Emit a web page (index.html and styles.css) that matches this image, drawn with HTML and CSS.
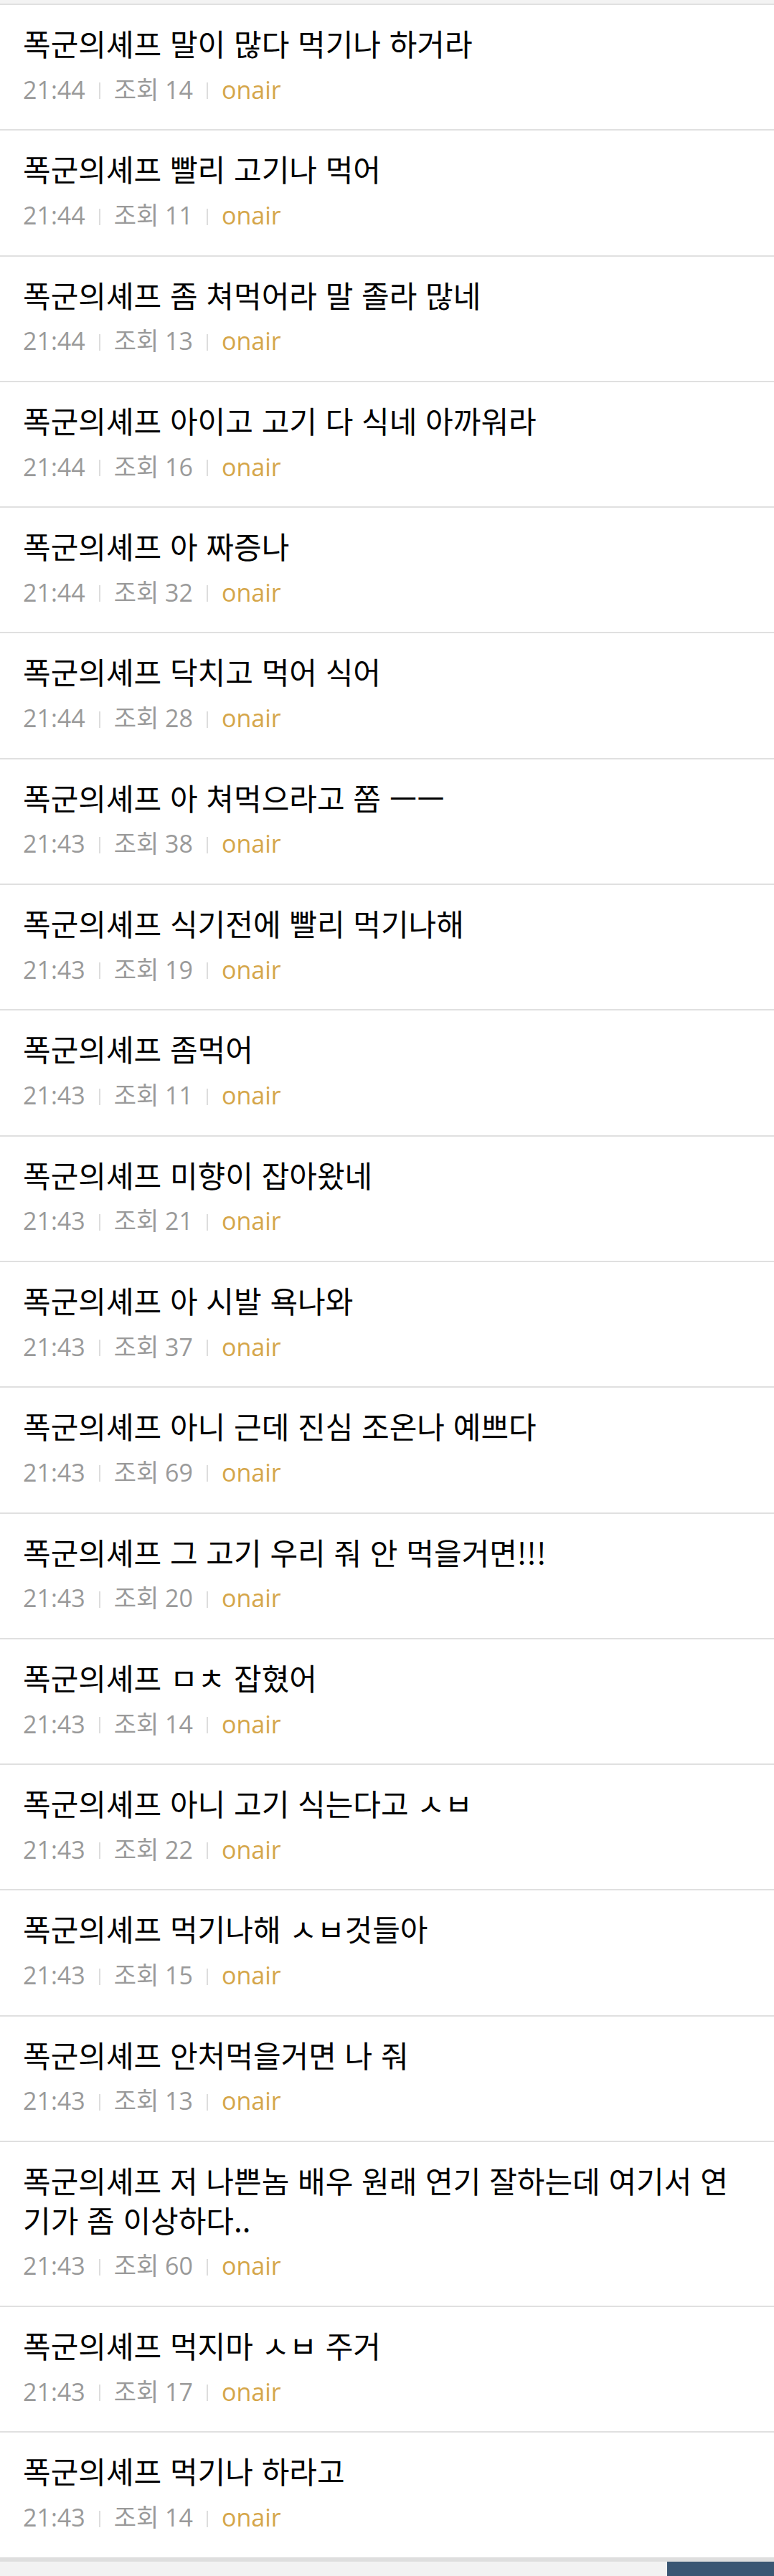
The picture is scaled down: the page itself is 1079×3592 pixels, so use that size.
FILE: index.html
```html
<!DOCTYPE html>
<html lang="ko">
<head>
<meta charset="utf-8">
<title>폭군의셰프</title>
<link rel="stylesheet" href="styles.css">
</head>
<body>
<div class="topband"></div>
<ul class="list">
  <li class="row"><p class="title">폭군의셰프 말이 많다 먹기나 하거라</p><div class="meta"><span class="time">21:44</span><span class="sep"></span><span class="views">조회 14</span><span class="sep"></span><span class="author">onair</span></div></li>
  <li class="row"><p class="title">폭군의셰프 빨리 고기나 먹어</p><div class="meta"><span class="time">21:44</span><span class="sep"></span><span class="views">조회 11</span><span class="sep"></span><span class="author">onair</span></div></li>
  <li class="row"><p class="title">폭군의셰프 좀 쳐먹어라 말 졸라 많네</p><div class="meta"><span class="time">21:44</span><span class="sep"></span><span class="views">조회 13</span><span class="sep"></span><span class="author">onair</span></div></li>
  <li class="row"><p class="title">폭군의셰프 아이고 고기 다 식네 아까워라</p><div class="meta"><span class="time">21:44</span><span class="sep"></span><span class="views">조회 16</span><span class="sep"></span><span class="author">onair</span></div></li>
  <li class="row"><p class="title">폭군의셰프 아 짜증나</p><div class="meta"><span class="time">21:44</span><span class="sep"></span><span class="views">조회 32</span><span class="sep"></span><span class="author">onair</span></div></li>
  <li class="row"><p class="title">폭군의셰프 닥치고 먹어 식어</p><div class="meta"><span class="time">21:44</span><span class="sep"></span><span class="views">조회 28</span><span class="sep"></span><span class="author">onair</span></div></li>
  <li class="row"><p class="title">폭군의셰프 아 쳐먹으라고 쫌 ㅡㅡ</p><div class="meta"><span class="time">21:43</span><span class="sep"></span><span class="views">조회 38</span><span class="sep"></span><span class="author">onair</span></div></li>
  <li class="row"><p class="title">폭군의셰프 식기전에 빨리 먹기나해</p><div class="meta"><span class="time">21:43</span><span class="sep"></span><span class="views">조회 19</span><span class="sep"></span><span class="author">onair</span></div></li>
  <li class="row"><p class="title">폭군의셰프 좀먹어</p><div class="meta"><span class="time">21:43</span><span class="sep"></span><span class="views">조회 11</span><span class="sep"></span><span class="author">onair</span></div></li>
  <li class="row"><p class="title">폭군의셰프 미향이 잡아왔네</p><div class="meta"><span class="time">21:43</span><span class="sep"></span><span class="views">조회 21</span><span class="sep"></span><span class="author">onair</span></div></li>
  <li class="row"><p class="title">폭군의셰프 아 시발 욕나와</p><div class="meta"><span class="time">21:43</span><span class="sep"></span><span class="views">조회 37</span><span class="sep"></span><span class="author">onair</span></div></li>
  <li class="row"><p class="title">폭군의셰프 아니 근데 진심 조온나 예쁘다</p><div class="meta"><span class="time">21:43</span><span class="sep"></span><span class="views">조회 69</span><span class="sep"></span><span class="author">onair</span></div></li>
  <li class="row"><p class="title">폭군의셰프 그 고기 우리 줘 안 먹을거면!!!</p><div class="meta"><span class="time">21:43</span><span class="sep"></span><span class="views">조회 20</span><span class="sep"></span><span class="author">onair</span></div></li>
  <li class="row"><p class="title">폭군의셰프 ㅁㅊ 잡혔어</p><div class="meta"><span class="time">21:43</span><span class="sep"></span><span class="views">조회 14</span><span class="sep"></span><span class="author">onair</span></div></li>
  <li class="row"><p class="title">폭군의셰프 아니 고기 식는다고 ㅅㅂ</p><div class="meta"><span class="time">21:43</span><span class="sep"></span><span class="views">조회 22</span><span class="sep"></span><span class="author">onair</span></div></li>
  <li class="row"><p class="title">폭군의셰프 먹기나해 ㅅㅂ것들아</p><div class="meta"><span class="time">21:43</span><span class="sep"></span><span class="views">조회 15</span><span class="sep"></span><span class="author">onair</span></div></li>
  <li class="row"><p class="title">폭군의셰프 안처먹을거면 나 줘</p><div class="meta"><span class="time">21:43</span><span class="sep"></span><span class="views">조회 13</span><span class="sep"></span><span class="author">onair</span></div></li>
  <li class="row"><p class="title">폭군의셰프 저 나쁜놈 배우 원래 연기 잘하는데 여기서 연기가 좀 이상하다..</p><div class="meta"><span class="time">21:43</span><span class="sep"></span><span class="views">조회 60</span><span class="sep"></span><span class="author">onair</span></div></li>
  <li class="row"><p class="title">폭군의셰프 먹지마 ㅅㅂ 주거</p><div class="meta"><span class="time">21:43</span><span class="sep"></span><span class="views">조회 17</span><span class="sep"></span><span class="author">onair</span></div></li>
  <li class="row"><p class="title">폭군의셰프 먹기나 하라고</p><div class="meta"><span class="time">21:43</span><span class="sep"></span><span class="views">조회 14</span><span class="sep"></span><span class="author">onair</span></div></li>
</ul>
<div class="footer"><div class="footer-btn"></div></div>
</body>
</html>
```

FILE: styles.css
```css
html, body {
  margin: 0;
  padding: 0;
  background: #ffffff;
}

body {
  font-family: "Noto Sans CJK KR", "Noto Sans", sans-serif;
  color: #000;
}

.topband {
  height: 5px;
  background: #f3f3f3;
}

.list {
  list-style: none;
  margin: 0;
  padding: 0;
}

.row {
  border-top: 2px solid #e0e0e0;
  padding: 26px 32px 32.6px 32px;
}

.title {
  margin: 0;
  font-family: "Noto Sans CJK KR", sans-serif;
  font-size: 42px;
  line-height: 54.7px;
  font-weight: 400;
  color: #000;
  word-break: break-all;
}

.meta {
  display: flex;
  align-items: center;
  height: 46px;
  margin-top: 14px;
  font-family: "Open Sans", "Noto Sans CJK KR", sans-serif;
  font-size: 34px;
  line-height: 46px;
  color: #9a9a9a;
  white-space: nowrap;
}

.sep {
  display: block;
  width: 2px;
  height: 23px;
  margin: 4px 19px 0 19px;
  background: #dddddd;
}

.author {
  color: #d5a64a;
}

.footer {
  border-top: 6px solid #dedede;
  background: #f2f2f2;
  display: flex;
  justify-content: flex-end;
  height: 40px;
}

.footer-btn {
  width: 149px;
  height: 40px;
  background: #3a5673;
}
```
